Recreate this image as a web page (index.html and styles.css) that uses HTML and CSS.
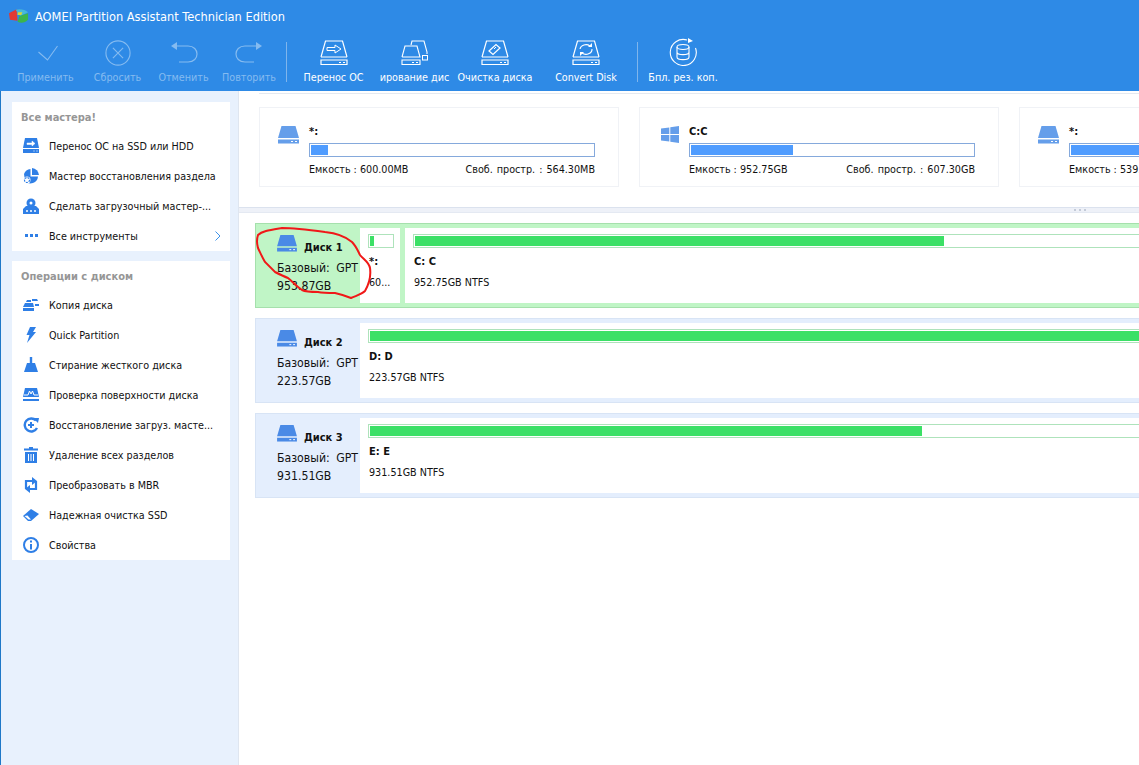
FILE: index.html
```html
<!DOCTYPE html>
<html lang="ru">
<head>
<meta charset="utf-8">
<title>AOMEI Partition Assistant Technician Edition</title>
<link rel="stylesheet" href="styles.css">
</head>
<body>
<svg class="defs" width="0" height="0">
  <defs>
    <symbol id="drive-line" viewBox="0 0 28 26">
      <path d="M1 17 L5.500 1 H22.500 L27 17" fill="none" stroke="currentColor" stroke-width="1.200"/>
      <path d="M1 17 H27" fill="none" stroke="currentColor" stroke-width="1"/>
      <path d="M1 20 H27 V24.500 H1 Z" fill="none" stroke="currentColor" stroke-width="1.200"/>
      <path d="M19 22.500 H21 M23 22.500 H25" stroke="currentColor" stroke-width="1"/>
    </symbol>
    <symbol id="drive-solid" viewBox="0 0 21 18">
      <path d="M3.500 0 H17.500 L21 12 H0 Z" fill="currentColor"/>
      <rect x="0" y="13.500" width="21" height="4" fill="currentColor"/>
      <path d="M13 15.500 H15 M17 15.500 H19" stroke="#fff" stroke-width="1"/>
    </symbol>
  </defs>
</svg>
<div class="app">
  <header class="header">
    <div class="titlebar">
      <svg class="logo" viewBox="0 0 22 16">
        <path d="M1 5 L9 1 L10 13 L2 12 Z" fill="#e23a33"/>
        <path d="M8 1.500 C12 0 18 1 21 4 L13 8 Z" fill="#46b9d8"/>
        <path d="M12 8 L21 5 L21 12 C18 15.500 13 16 10 14 Z" fill="#3cb54a"/>
        <path d="M10 4 L15 4 L14 7 L10 7 Z" fill="#d8d636"/>
      </svg>
      <span class="title">AOMEI Partition Assistant Technician Edition</span>
    </div>
    <nav class="toolbar">
      <div class="tool off w71">
        <svg class="ticon" viewBox="0 0 28 26"><path d="M6.500 12 L15.500 20 L25.500 6" fill="none" stroke="currentColor" stroke-width="1.100"/></svg>
        <span>Применить</span>
      </div>
      <div class="tool off w73">
        <svg class="ticon" viewBox="0 0 28 28"><circle cx="14" cy="14" r="13" fill="none" stroke="currentColor" stroke-width="1.200"/><path d="M8.500 8.500 L19.500 19.500 M19.500 8.500 L8.500 19.500" stroke="currentColor" stroke-width="1.200"/></svg>
        <span>Сбросить</span>
      </div>
      <div class="tool off w59">
        <svg class="ticon" viewBox="0 0 28 26"><path d="M3 6 H18 C30 6 30 22 18 22 H9" fill="none" stroke="currentColor" stroke-width="1.200"/><path d="M1 6 L7 2 V10 Z" fill="currentColor"/></svg>
        <span>Отменить</span>
      </div>
      <div class="tool off w72">
        <svg class="ticon" viewBox="0 0 28 26"><path d="M25 6 H10 C-2 6 -2 22 10 22 H19" fill="none" stroke="currentColor" stroke-width="1.200"/><path d="M27 6 L21 2 V10 Z" fill="currentColor"/></svg>
        <span>Повторить</span>
      </div>
      <div class="sep"></div>
      <div class="tool w91">
        <svg class="ticon" viewBox="0 0 28 26"><use href="#drive-line"/><path d="M7 7.500 H15 V5 L21 9 L15 13 V10.500 H7 Z" fill="none" stroke="currentColor" stroke-width="1"/></svg>
        <span>Перенос ОС</span>
      </div>
      <div class="tool w71 clip">
        <svg class="ticon" viewBox="0 0 28 26"><path d="M10 5 L11 1 H23 L26 12 V14" fill="none" stroke="currentColor" stroke-width="1.100"/><path d="M1 17 L4 6 H16 L19 17 H1" fill="none" stroke="currentColor" stroke-width="1.100"/><path d="M1 20 H19 V24.500 H1 Z M11 22.500 H13 M15 22.500 H17" fill="none" stroke="currentColor" stroke-width="1.100"/><rect x="21.500" y="15.500" width="5" height="4.500" fill="none" stroke="currentColor"/></svg>
        <span>ирование дис</span>
      </div>
      <div class="tool w90">
        <svg class="ticon" viewBox="0 0 28 26"><use href="#drive-line"/><path d="M8 11 L15 4.500 L19 8 L12 14.500 Z" fill="none" stroke="currentColor" stroke-width="1.200"/><path d="M13 9 L15 7" stroke="currentColor"/></svg>
        <span>Очистка диска</span>
      </div>
      <div class="tool w92">
        <svg class="ticon" viewBox="0 0 28 26"><use href="#drive-line"/><path d="M8 9 A6 5 0 0 1 18 6 M20 9 A6 5 0 0 1 10 13" fill="none" stroke="currentColor" stroke-width="1.100"/><path d="M16 7 H20 V3 Z M12 12 H8 V16 Z" fill="currentColor"/></svg>
        <span>Convert Disk</span>
      </div>
      <div class="sep sep2"></div>
      <div class="tool w70">
        <svg class="ticon backup" viewBox="0 0 28 28"><path d="M18 2 A13 13 0 1 0 26.500 10" fill="none" stroke="currentColor" stroke-width="1.100"/><path d="M19 0 L24 3 L19 5 Z" fill="currentColor"/><ellipse cx="14" cy="9" rx="6" ry="2.500" fill="none" stroke="currentColor" stroke-width="1.100"/><path d="M8 9 V19 C8 22.500 20 22.500 20 19 V9 M8 14 C8 17.500 20 17.500 20 14" fill="none" stroke="currentColor" stroke-width="1.100"/></svg>
        <span>Бпл. рез. коп.</span>
      </div>
    </nav>
  </header>
  <div class="body">
    <aside class="sidebar">
      <section class="panel">
        <h2 class="panel-title">Все мастера!</h2>
        <div class="side-item">
          <svg class="sicon" viewBox="0 0 16 16"><path d="M2 0 H14 L16 10 H0 Z" fill="currentColor"/><rect y="11" width="16" height="4" fill="currentColor"/><path d="M4 5 H9 V3 L12 5.500 L9 8 V6.500 H4 Z M10 13 H12 M13 13 H15" fill="#fff" stroke="#fff" stroke-width=".5"/></svg>
          <span>Перенос ОС на SSD или HDD</span>
        </div>
        <div class="side-item">
          <svg class="sicon" viewBox="0 0 16 16"><path d="M9 0 A7.500 7.500 0 0 1 16 7 H9 Z" fill="currentColor"/><path d="M7.500 1 V8.500 H15 A7.500 7.500 0 0 1 2 13 L1 6 A7.500 7.500 0 0 1 7.500 1 Z" fill="currentColor"/><circle cx="4" cy="12" r="3.500" fill="#fff"/><circle cx="4" cy="12" r="2.500" fill="none" stroke="currentColor" stroke-width="1.200" stroke-dasharray="2 1"/></svg>
          <span>Мастер восстановления раздела</span>
        </div>
        <div class="side-item">
          <svg class="sicon" viewBox="0 0 16 16"><circle cx="8" cy="5" r="4.500" fill="currentColor"/><circle cx="8" cy="5" r="1.500" fill="#fff"/><path d="M3 8 H13 L16 11 V16 H0 V11 Z" fill="currentColor"/><path d="M3 13 H5 M7 13 H9 M11 13 H13" stroke="#fff" stroke-width="1.500"/></svg>
          <span>Сделать загрузочный мастер-...</span>
        </div>
        <div class="side-item">
          <svg class="sicon" viewBox="0 0 16 16"><path d="M2 6 H5 V9 H2 Z M7 6 H10 V9 H7 Z M12 6 H15 V9 H12 Z" fill="currentColor"/></svg>
          <span>Все инструменты</span>
          <svg class="chev" viewBox="0 0 6 10"><path d="M.5 .5 L5 5 L.5 9.500" fill="none" stroke="#3c92ea" stroke-width="1"/></svg>
        </div>
      </section>
      <section class="panel">
        <h2 class="panel-title">Операции с диском</h2>
        <div class="side-item">
          <svg class="sicon" viewBox="0 0 16 16"><path d="M3 5 L4 3 H8 V5 Z M9 2 H14 L15 4 H9 Z M2 6 H10 L11 10 H0 Z" fill="currentColor"/><rect y="11" width="11" height="3" fill="currentColor"/><rect x="12" y="7" width="4" height="2" fill="currentColor"/></svg>
          <span>Копия диска</span>
        </div>
        <div class="side-item">
          <svg class="sicon" viewBox="0 0 16 16"><path d="M7 0 H13 L10 5 H13 L4 16 L6.500 8 H3.500 Z" fill="currentColor"/></svg>
          <span>Quick Partition</span>
        </div>
        <div class="side-item">
          <svg class="sicon" viewBox="0 0 16 16"><path d="M6.800 0 H9.200 V6 H12 L15 15 H1 L4 6 H6.800 Z" fill="currentColor"/></svg>
          <span>Стирание жесткого диска</span>
        </div>
        <div class="side-item">
          <svg class="sicon" viewBox="0 0 16 16"><path d="M2 1 H14 L16 10 H0 Z" fill="currentColor"/><path d="M1 8 L5 8 L6.500 4 L8 7 L9.500 4 L11 8 H15" fill="none" stroke="#fff" stroke-width="1"/><rect y="12" width="16" height="2" fill="currentColor"/></svg>
          <span>Проверка поверхности диска</span>
        </div>
        <div class="side-item">
          <svg class="sicon" viewBox="0 0 16 16"><path d="M13 3.500 A6.500 6.500 0 1 0 14 11" fill="none" stroke="currentColor" stroke-width="2.400"/><path d="M10 1 L16 1 L15 6 Z" fill="currentColor"/><path d="M5 8 H11 M8 5 V11" stroke="currentColor" stroke-width="2"/></svg>
          <span>Восстановление загруз. масте...</span>
        </div>
        <div class="side-item">
          <svg class="sicon" viewBox="0 0 16 16"><path d="M6 0 H10 V1.500 H15 V3.500 H1 V1.500 H6 Z" fill="currentColor"/><path d="M2 5 H14 V16 H2 Z" fill="currentColor"/><path d="M5.500 7 V14 M8 7 V14 M10.500 7 V14" stroke="#fff" stroke-width="1"/></svg>
          <span>Удаление всех разделов</span>
        </div>
        <div class="side-item">
          <svg class="sicon" viewBox="0 0 16 16"><path d="M3 12 V4 H10 M13 4 V12 H6" fill="none" stroke="currentColor" stroke-width="2.200"/><path d="M9 0 L14 4 L9 8 Z M7 8 L2 12 L7 16 Z" fill="currentColor"/></svg>
          <span>Преобразовать в MBR</span>
        </div>
        <div class="side-item">
          <svg class="sicon" viewBox="0 0 16 16"><path d="M0 9 L8 2 L16 7 L8 14 H5 Z" fill="currentColor"/><path d="M1.500 9 L5.500 12.500 L8 12.500 L4.500 8.500 Z" fill="#fff"/></svg>
          <span>Надежная очистка SSD</span>
        </div>
        <div class="side-item">
          <svg class="sicon" viewBox="0 0 16 16"><circle cx="8" cy="8" r="7" fill="none" stroke="currentColor" stroke-width="2"/><path d="M8 3.500 V5.500 M8 7 V12.500" stroke="currentColor" stroke-width="2"/></svg>
          <span>Свойства</span>
        </div>
      </section>
    </aside>
    <main class="main">
      <div class="volumes-top"></div>
      <div class="cards">
        <article class="card">
          <svg class="card-icon"><use href="#drive-solid"/></svg>
          <div class="card-body">
            <div class="card-name">*:</div>
            <div class="meter"><div class="meter-fill" style="width:6.100%"></div></div>
            <div class="card-info"><span>Емкость : 600.00MB</span><span class="free">Своб. простр. : 564.30MB</span></div>
          </div>
        </article>
        <article class="card">
          <svg class="card-icon win" viewBox="0 0 18 17"><path d="M0 2.500 L8.300 1.400 V8 H0 Z M9.300 1.200 L18 0 V8 H9.300 Z M0 9 H8.300 V15.500 L0 14.500 Z M9.300 9 H18 V17 L9.300 15.700 Z" fill="currentColor"/></svg>
          <div class="card-body">
            <div class="card-name">C:C</div>
            <div class="meter"><div class="meter-fill" style="width:36.200%"></div></div>
            <div class="card-info"><span>Емкость : 952.75GB</span><span class="free">Своб. простр. : 607.30GB</span></div>
          </div>
        </article>
        <article class="card">
          <svg class="card-icon"><use href="#drive-solid"/></svg>
          <div class="card-body">
            <div class="card-name">*:</div>
            <div class="meter"><div class="meter-fill" style="width:60%"></div></div>
            <div class="card-info"><span>Емкость : 539.00MB</span></div>
          </div>
        </article>
      </div>
      <div class="splitter"><i></i><i></i><i></i></div>
      <div class="disks">
        <div class="disk selected">
          <div class="disk-label">
            <div class="disk-head"><svg class="disk-icon"><use href="#drive-solid"/></svg><b>Диск 1</b></div>
            <div>Базовый: GPT</div>
            <div>953.87GB</div>
          </div>
          <div class="part part-small">
            <div class="pbar"><div class="pfill" style="width:16%"></div></div>
            <div class="pname">*:</div>
            <div class="pinfo">60...</div>
          </div>
          <div class="part part-wide">
            <div class="pbar"><div class="pfill" style="width:63.800%"></div></div>
            <div class="pname">C: C</div>
            <div class="pinfo">952.75GB NTFS</div>
          </div>
        </div>
        <div class="disk">
          <div class="disk-label">
            <div class="disk-head"><svg class="disk-icon"><use href="#drive-solid"/></svg><b>Диск 2</b></div>
            <div>Базовый: GPT</div>
            <div>223.57GB</div>
          </div>
          <div class="part part-full">
            <div class="pbar"><div class="pfill" style="width:100%"></div></div>
            <div class="pname">D: D</div>
            <div class="pinfo">223.57GB NTFS</div>
          </div>
        </div>
        <div class="disk">
          <div class="disk-label">
            <div class="disk-head"><svg class="disk-icon"><use href="#drive-solid"/></svg><b>Диск 3</b></div>
            <div>Базовый: GPT</div>
            <div>931.51GB</div>
          </div>
          <div class="part part-full">
            <div class="pbar"><div class="pfill" style="width:63.200%"></div></div>
            <div class="pname">E: E</div>
            <div class="pinfo">931.51GB NTFS</div>
          </div>
        </div>
      </div>
    </main>
  </div>
  <svg class="scribble" viewBox="0 0 1139 765">
    <path d="M258 235 C262 231 270 230 282 228 C295 228 310 230 325 232 C335 233 345 236 352 242 C356 246 358 251 360 255 C363 259 369 262 370 268 C371 275 369 284 365 291 C362 294 358 295 351 298 C346 296 340 294 335 293 C328 293 323 293 318 292 C312 292 306 292 302 290 C296 286 292 281 288 278 C283 276 279 274 275 272 C271 268 268 265 265 262 C262 257 260 252 258 248 C257 244 256 241 258 235 Z" fill="none" stroke="#f01818" stroke-width="2"/>
  </svg>
</div>
</body>
</html>
```
FILE: styles.css
```css
* { box-sizing: border-box; }
html, body { margin: 0; padding: 0; height: 100%; overflow: hidden; }
body { font-family: "DejaVu Sans Condensed", "DejaVu Sans", sans-serif; font-size: 10.700px; color: #111; background: #fff; }
.defs { position: absolute; }
.app { position: relative; width: 1139px; height: 765px; display: flex; flex-direction: column; overflow: hidden; }

.header { height: 91px; background: #2e8ae6; color: #fff; flex: none; }
.titlebar { height: 32px; display: flex; align-items: center; padding-left: 8px; }
.logo { width: 21px; height: 16px; margin-right: 6px; }
.title { font-size: 12.700px; }
.toolbar { display: flex; padding-left: 10px; height: 59px; }
.tool { display: flex; flex-direction: column; align-items: center; flex: none; padding-top: 8px; white-space: nowrap; overflow: visible; }
.tool span { margin-top: 5px; line-height: 14px; }
.tool.clip { overflow: hidden; }
.off { color: #85bbf0; }
.ticon { width: 28px; height: 26px; display: block; }
.backup { width: 28px; height: 28px; margin-top: -2px; }
.w71 { width: 71px; }
.w73 { width: 73px; }
.w59 { width: 59px; }
.w72 { width: 72px; }
.w91 { width: 91px; }
.w90 { width: 90px; }
.w92 { width: 92px; }
.w70 { width: 70px; }
.sep { width: 1px; height: 40px; margin: 10px 1px 0 1px; background: #7fb5ec; flex: none; }
.sep2 { margin-left: 5px; margin-right: 10px; }

.body { flex: 1; display: flex; min-height: 0; }
.sidebar { width: 239px; flex: none; background: #e8f1fd; border-left: 1px solid #1f78c8; border-right: 1px solid #dfe6f0; padding: 11px 8px 0 11px; display: flex; flex-direction: column; gap: 10px; }
.panel { background: #fff; }
.panel-title { margin: 0; height: 29px; line-height: 31px; padding-left: 9px; font-size: 11px; font-weight: bold; color: #969696; }
.side-item { height: 30px; display: flex; align-items: center; padding-left: 11px; white-space: nowrap; font-size: 10.700px; }
.sicon { width: 16px; height: 16px; color: #2f7fe6; margin-right: 10px; flex: none; }
.chev { width: 6px; height: 10px; margin-left: auto; margin-right: 9px; }

.main { flex: 1; min-width: 0; overflow: hidden; background: #fff; }
.volumes-top { height: 3px; margin-left: 20px; border-bottom: 1px solid #e4e9f0; }
.cards { display: flex; gap: 20px; padding: 13px 0 0 20px; height: 113px; }
.card { width: 360px; height: 80px; flex: none; border: 1px solid #f0f2f6; display: flex; padding: 18px 23px 0 18px; }
.card-icon { width: 21px; height: 18px; color: #659eea; flex: none; margin-right: 10px; }
.card-icon.win { width: 18px; height: 17px; margin: 0 10px 0 3px; }
.card-body { flex: 1; min-width: 0; }
.card-name { font-weight: bold; height: 17px; line-height: 11px; font-size: 11px; }
.meter { height: 14px; border: 1px solid #85a9dc; padding: 1px; background: #fff; }
.meter-fill { height: 100%; background: #4f9cff; }
.card-info { display: flex; justify-content: space-between; margin-top: 6px; line-height: 14px; white-space: nowrap; }
.free { word-spacing: 1px; }

.splitter { height: 6px; background: #eef1f8; border-top: 1px solid #dbe2ee; border-bottom: 1px solid #e4e9f2; display: flex; justify-content: flex-end; gap: 3px; padding: 1px 53px 0 0; margin-bottom: 10px; }
.splitter i { width: 2px; height: 2px; background: #c4cbd8; }

.disks { margin-left: 16px; width: 1000px; display: flex; flex-direction: column; gap: 10px; }
.disk { height: 85px; display: flex; background: #e4eefd; border: 1px solid #d8e4f5; padding: 4px 0; }
.disk.selected { background: #c0f5c6; border-color: #a5e0ac; }
.disk-label { width: 104px; flex: none; padding: 3px 0 0 21px; line-height: 17.500px; white-space: nowrap; font-size: 12.200px; word-spacing: 3px; }
.disk-head { display: flex; align-items: flex-start; gap: 7px; height: 29px; font-size: 11px; word-spacing: 0; }
.disk-head b { margin-top: 8px; }
.disk-icon { width: 20px; height: 17px; color: #4a8ae6; margin-top: 4px; }
.part { background: #fff; padding: 6px 8px 0 8px; overflow: hidden; white-space: nowrap; }
.part-small { width: 40px; flex: none; padding-right: 6px; }
.part-wide { flex: 1; margin-left: 5px; }
.part-full { flex: 1; }
.pbar { height: 14px; border: 1px solid #aee3bb; padding: 1px; background: #fff; }
.pfill { height: 100%; background: #3be066; }
.pname { font-weight: bold; margin-top: 7px; padding-left: 1px; line-height: 14px; font-size: 11px; }
.pinfo { margin-top: 7px; padding-left: 1px; line-height: 14px; }

.scribble { position: absolute; left: 0; top: 0; width: 1139px; height: 765px; pointer-events: none; }
```
